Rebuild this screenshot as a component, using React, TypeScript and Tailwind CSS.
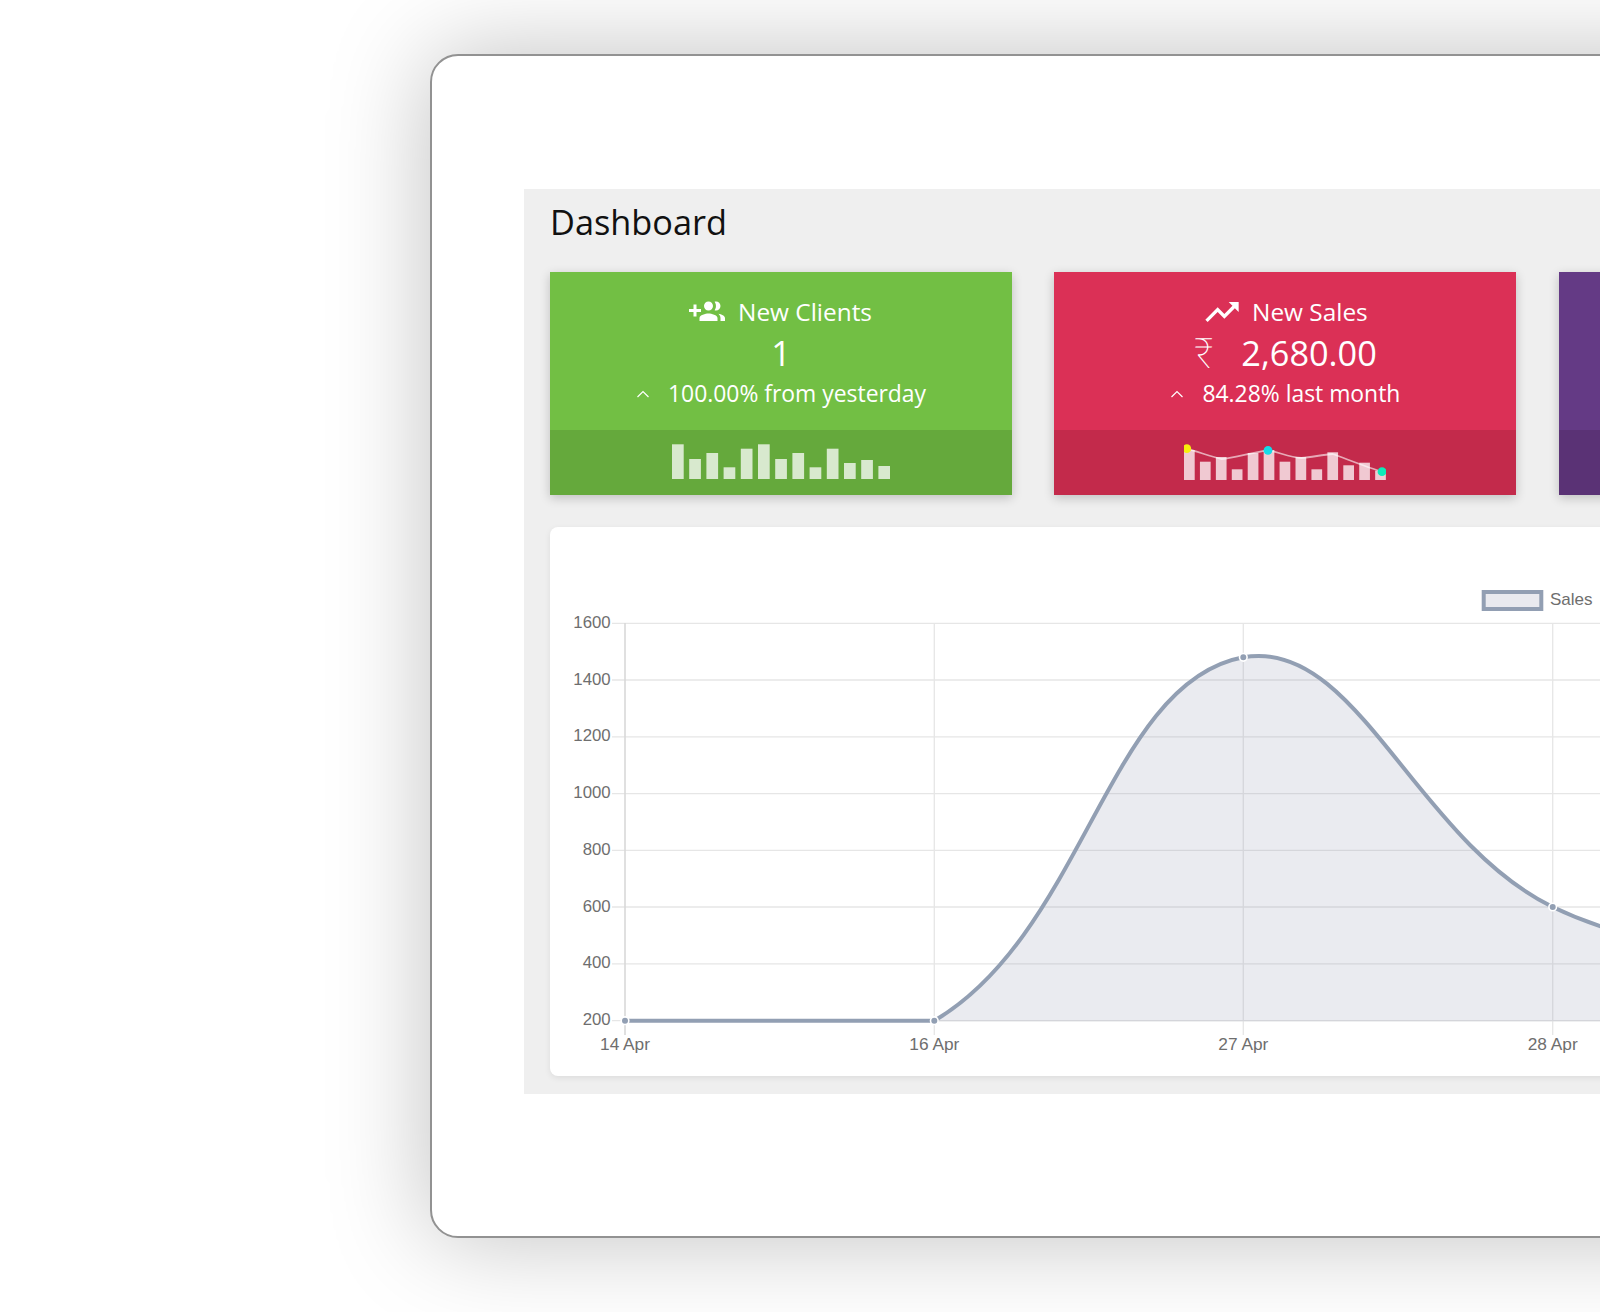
import type { ReactNode } from "react";
import { MdTrendingUp } from "react-icons/md";

const greenBars = [34.7, 20, 26, 11.7, 30.3, 34.7, 20, 26, 11.7, 30.3, 16, 19, 13];
const redBars = [30, 18.3, 23, 10.7, 27, 30, 18.3, 23, 10.7, 27.7, 14.7, 17.3, 9.3];

const yTicks = [
  { label: "1600", y: 623.3 },
  { label: "1400", y: 680 },
  { label: "1200", y: 736.8 },
  { label: "1000", y: 793.6 },
  { label: "800", y: 850.3 },
  { label: "600", y: 907 },
  { label: "400", y: 963.8 },
  { label: "200", y: 1020.7 },
];

const xTicks = [
  { label: "14 Apr", x: 625 },
  { label: "16 Apr", x: 934.3 },
  { label: "27 Apr", x: 1243.3 },
  { label: "28 Apr", x: 1552.7 },
];

const salesLine =
  "M625 1020.7 L934.3 1020.7 C1084.4 932.5 1108.4 682.1 1243.3 657.3 C1355.8 636.6 1414.4 839.3 1552.7 907 C1590 925 1625 935 1661.8 942";

function GroupAddIcon() {
  return (
    <svg width="36" height="36" viewBox="0 0 24 24" fill="white" className="mr-[13px]">
      <path d="M8 10H5V7H3v3H0v2h3v3h2v-3h3v-2zm10 1c1.66 0 2.99-1.34 2.99-3S19.66 5 18 5c-.32 0-.63.05-.93.14.57.81.9 1.79.9 2.86s-.34 2.04-.9 2.86c.3.09.61.14.93.14zm-5 0c1.66 0 3-1.34 3-3s-1.34-3-3-3-3 1.34-3 3 1.34 3 3 3zm6.62 2.16c.83.73 1.38 1.66 1.38 2.84v2h3v-2c0-1.54-2.37-2.49-4.38-2.84zM13 13c-2 0-6 1-6 3v2h12v-2c0-2-4-3-6-3z" />
    </svg>
  );
}

function Chevron() {
  return (
    <svg width="14" height="8" viewBox="0 0 14 8" fill="none" className="mr-[18px] shrink-0">
      <path d="M1.5 7 7 1.5 12.5 7" stroke="white" strokeWidth="1.2" />
    </svg>
  );
}

function Bars({ bars, step, barWidth }: { bars: number[]; step: number; barWidth: number }) {
  return (
    <>
      {bars.map((h, i) => (
        <rect key={i} x={i * step} y={36 - h} width={barWidth} height={h} fill="white" fillOpacity="0.75" />
      ))}
    </>
  );
}

function StatCard({
  bg,
  footerBg,
  title,
  icon,
  value,
  change,
  children,
}: {
  bg: string;
  footerBg: string;
  title?: string;
  icon?: ReactNode;
  value?: ReactNode;
  change?: string;
  children?: ReactNode;
}) {
  return (
    <div className={`w-[462px] h-[223px] shrink-0 flex flex-col shadow-[0_3px_10px_rgba(0,0,0,0.2)] ${bg}`}>
      <div className="h-[158px] pt-[20px] flex flex-col items-center text-white">
        {title && (
          <div className="h-[40px] pr-[1px] flex items-center text-[24.4px]">
            {icon}
            <span>{title}</span>
          </div>
        )}
        {value && <div className="h-[42px] flex items-center text-[34.3px]">{value}</div>}
        {change && (
          <div className="h-[40px] flex items-center text-[22.9px]">
            <Chevron />
            <span>{change}</span>
          </div>
        )}
      </div>
      <div className={`h-[65px] flex items-center justify-center ${footerBg}`}>{children}</div>
    </div>
  );
}

function SalesChart() {
  return (
    <svg width="1050" height="549" viewBox="550 527 1050 549" className="block font-['Liberation_Sans']">
      {yTicks.map((t) => (
        <line key={t.label} x1="612" x2="1600" y1={t.y} y2={t.y} stroke="#e6e6e6" strokeWidth="1.3" />
      ))}
      {xTicks.map((t, i) => (
        <line key={t.label} x1={t.x} x2={t.x} y1="623" y2="1035" stroke={i === 0 ? "#d9d9d9" : "#e6e6e6"} strokeWidth={i === 0 ? 1.6 : 1.3} />
      ))}
      <path d={`${salesLine} L1661.8 1020.7 Z`} fill="rgb(138,146,170)" fillOpacity="0.18" />
      <line x1="934" x2="1600" y1="1020.7" y2="1020.7" stroke="#d4d5da" strokeWidth="1.3" />
      <path d={salesLine} fill="none" stroke="#929fb3" strokeWidth="4" />
      {[
        [625, 1020.7],
        [934.3, 1020.7],
        [1243.3, 657.3],
        [1552.7, 907],
      ].map(([cx, cy]) => (
        <circle key={cx} cx={cx} cy={cy} r="3.8" fill="#929fb3" stroke="white" strokeWidth="1.6" />
      ))}
      {yTicks.map((t) => (
        <text key={t.label} x="610.7" y={t.y + 4.6} textAnchor="end" fontSize="16.8" fill="#6e6e6e">
          {t.label}
        </text>
      ))}
      {xTicks.map((t) => (
        <text key={t.label} x={t.x} y="1049.5" textAnchor="middle" fontSize="17.3" fill="#6e6e6e">
          {t.label}
        </text>
      ))}
      <rect x="1483.7" y="592" width="57.6" height="17" fill="#e9eaef" stroke="#929fb3" strokeWidth="4" />
      <text x="1550" y="605" fontSize="17" fill="#6e6e6e">
        Sales
      </text>
    </svg>
  );
}

export default function App() {
  return (
    <div className="w-[1600px] h-[1312px] overflow-hidden bg-white pl-[430px] pt-[54px] font-['Open_Sans',sans-serif]">
      <div className="w-[1400px] h-[1184px] bg-white border-2 border-[#929292] rounded-[28px] shadow-[0_0_100px_rgba(0,0,0,0.25)] pl-[92px] pt-[133px]">
        <div className="w-[1300px] h-[905px] bg-[#efefef] pl-[26px]">
          <h1 className="h-[66px] leading-[66px] text-[34.3px] text-[#111111]">Dashboard</h1>
          <div className="mt-[17px] flex gap-[42.4px]">
            <StatCard
              bg="bg-[#72bf44]"
              footerBg="bg-[#65a93c]"
              title="New Clients"
              icon={<GroupAddIcon />}
              value="1"
              change="100.00% from yesterday"
            >
              <svg width="218" height="36" viewBox="0 0 218 36" className="-mt-[4px]">
                <Bars bars={greenBars} step={17.2} barWidth={11.7} />
              </svg>
            </StatCard>
            <StatCard
              bg="bg-[#db3056]"
              footerBg="bg-[#c32a4b]"
              title="New Sales"
              icon={<MdTrendingUp size={40} className="mr-[10px]" />}
              value={
                <>
                  <span className="mr-[28px] font-['Roboto'] font-thin text-[42px]">₹</span>
                  <span>2,680.00</span>
                </>
              }
              change="84.28% last month"
            >
              <svg width="202" height="46" viewBox="0 -10 202 46" className="-mt-[11px]">
                <Bars bars={redBars} step={15.93} barWidth={10.7} />
                <path
                  d="M2.8 4.7 C15 8 28 13 37.7 15 C50 14 70 8 84 6.3 C95 8 105 13.5 117.5 14 C128 13 138 11 148.6 10 C160 14 185 24 198 27.7"
                  fill="none"
                  stroke="white"
                  strokeOpacity="0.6"
                  strokeWidth="1.8"
                />
                <circle cx="2.8" cy="4.7" r="4.4" fill="#f7f00b" />
                <circle cx="84" cy="6.3" r="4.4" fill="#14dbe8" />
                <circle cx="198" cy="27.7" r="4.4" fill="#0deab8" />
              </svg>
            </StatCard>
            <StatCard bg="bg-[#643a85]" footerBg="bg-[#5a3275]" />
          </div>
          <div className="mt-[32px] w-[1200px] h-[549px] bg-white rounded-lg shadow-[0_2px_6px_rgba(0,0,0,0.08)]">
            <SalesChart />
          </div>
        </div>
      </div>
    </div>
  );
}
